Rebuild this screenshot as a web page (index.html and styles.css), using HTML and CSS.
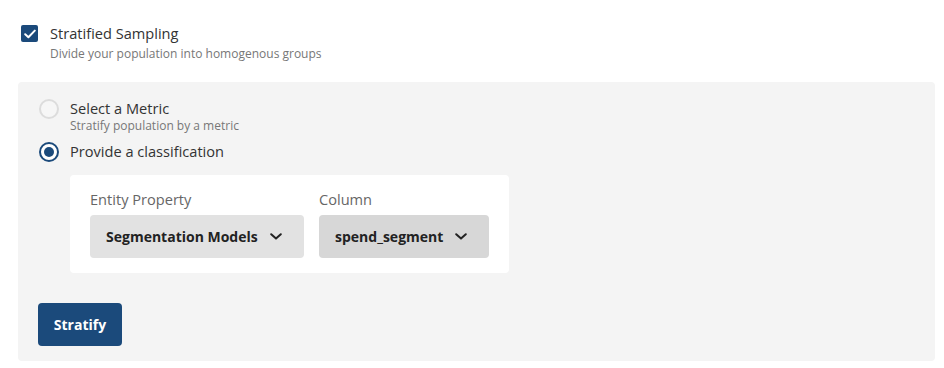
FILE: index.html
```html
<!DOCTYPE html>
<html>
<head>
<meta charset="utf-8">
<link rel="stylesheet" href="styles.css">
</head>
<body>
<div class="page">
  <div class="check-row">
    <span class="checkbox">
      <svg width="12" height="10" viewBox="0 0 12 10"><path d="M1.2 5.2 L4.4 8.2 L10.8 1.6" fill="none" stroke="#fff" stroke-width="2" stroke-linecap="round" stroke-linejoin="round"/></svg>
    </span>
    <div class="check-text">
      <div class="title">Stratified Sampling</div>
      <div class="sub">Divide your population into homogenous groups</div>
    </div>
  </div>
  <div class="panel">
    <div class="radio-row">
      <span class="radio"></span>
      <div class="radio-text">
        <div class="rtitle">Select a Metric</div>
        <div class="rsub">Stratify population by a metric</div>
      </div>
    </div>
    <div class="radio-row second">
      <span class="radio on"><span class="dot"></span></span>
      <div class="radio-text">
        <div class="rtitle">Provide a classification</div>
      </div>
    </div>
    <div class="card">
      <div class="field">
        <div class="label">Entity Property</div>
        <div class="select s1">Segmentation Models
          <svg class="chev" width="12" height="7" viewBox="0 0 12 7"><path d="M1.2 1.2 L6 5.6 L10.8 1.2" fill="none" stroke="#222" stroke-width="2" stroke-linecap="round" stroke-linejoin="round"/></svg>
        </div>
      </div>
      <div class="field">
        <div class="label">Column</div>
        <div class="select s2">spend_segment
          <svg class="chev" width="12" height="7" viewBox="0 0 12 7"><path d="M1.2 1.2 L6 5.6 L10.8 1.2" fill="none" stroke="#222" stroke-width="2" stroke-linecap="round" stroke-linejoin="round"/></svg>
        </div>
      </div>
    </div>
    <button class="btn">Stratify</button>
  </div>
</div>
</body>
</html>
```
FILE: styles.css
```css
* { box-sizing: border-box; }
html, body { margin: 0; padding: 0; background: #fff; }
body { font-family: "Open Sans", "Noto Sans", sans-serif; color: #333; }
.page { padding: 24px 0 0 18px; width: 935px; }
.check-row { display: flex; align-items: flex-start; padding-left: 3px; }
.checkbox {
  width: 17px; height: 17px; border-radius: 2px; background: #1b4a7b;
  display: flex; align-items: center; justify-content: center; margin-top: 1px; flex: none;
}
.check-text { margin-left: 12px; }
.title { font-size: 14.6px; line-height: 19px; color: #333; }
.sub { font-size: 12px; line-height: 16px; color: #777; margin-top: 3px; }
.panel {
  margin-top: 20px; background: #f4f4f4; border-radius: 4px;
  padding: 17px 20px 14px 21px; height: 279px;
}
.radio-row { display: flex; align-items: flex-start; }
.radio-row.second { margin-top: 9px; }
.radio {
  width: 20px; height: 20px; border-radius: 50%; border: 2px solid #dcdcdc;
  background: #f6f6f6; flex: none; display: flex; align-items: center; justify-content: center;
}
.radio.on { border: 2px solid #1b4a7b; background: #fff; }
.dot { width: 10px; height: 10px; border-radius: 50%; background: #1b4a7b; }
.radio-text { margin-left: 11px; }
.rtitle { font-size: 14.6px; line-height: 19px; color: #333; }
.rsub { font-size: 12px; line-height: 15px; color: #777; }
.card {
  margin: 13px 0 0 31px; width: 439px; background: #fff; border-radius: 4px;
  padding: 15px 20px 15px 20px; display: flex; gap: 15px;
}
.field { flex: none; }
.label { font-size: 14.6px; line-height: 19px; color: #666; }
.select {
  margin-top: 6px; height: 43px; border-radius: 4px; background: #e2e2e2;
  display: flex; align-items: center; padding: 0 0 0 16px; white-space: nowrap;
  font-size: 14px; font-weight: 700; color: #222;
}
.select .chev { margin-left: 12px; flex: none; }
.s1 { width: 214px; }
.s2 { width: 170px; background: #d7d7d7; }
.btn {
  margin-top: 30px; width: 84px; height: 43px; border: none; border-radius: 4px;
  background: #1b4a7b; color: #fff; font-family: "Open Sans", sans-serif;
  font-size: 14px; font-weight: 700; padding: 0;
  display: block; margin-left: -1px;
}
```
